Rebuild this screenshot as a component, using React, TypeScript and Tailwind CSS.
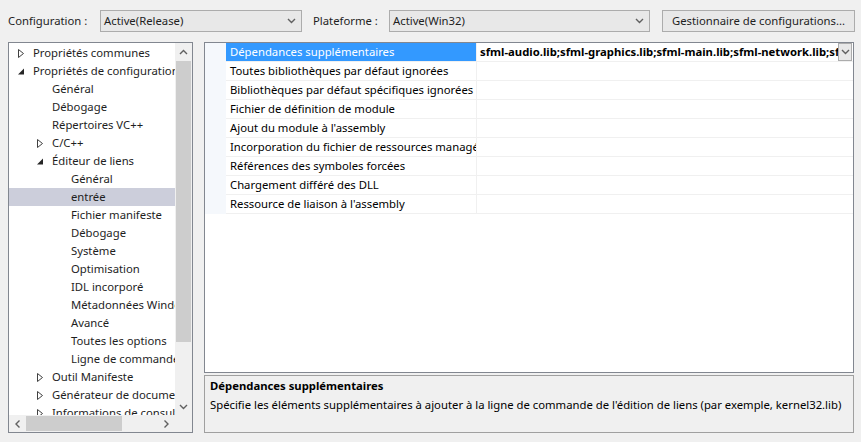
import React from 'react'

const font = "font-['Noto_Sans','Liberation_Sans',sans-serif]"

const Chevron = ({ className = '' }: { className?: string }) => (
  <svg width="9" height="6" viewBox="0 0 9 6" className={className}>
    <polyline points="1,1 4.5,4.5 8,1" fill="none" stroke="#606060" strokeWidth="1.4" />
  </svg>
)

const Select = ({ value, width }: { value: string; width: string }) => (
  <div
    className={`${width} h-[22px] flex items-center justify-between border border-[#acacac] bg-[#e8e8e8] pl-[3px] pr-[5px]`}
  >
    <span>{value}</span>
    <Chevron />
  </div>
)

type Node = { label: string; level: number; kind: 'open' | 'closed' | 'leaf'; selected?: boolean }

const tree: Node[] = [
  { label: 'Propriétés communes', level: 0, kind: 'closed' },
  { label: 'Propriétés de configuration', level: 0, kind: 'open' },
  { label: 'Général', level: 1, kind: 'leaf' },
  { label: 'Débogage', level: 1, kind: 'leaf' },
  { label: 'Répertoires VC++', level: 1, kind: 'leaf' },
  { label: 'C/C++', level: 1, kind: 'closed' },
  { label: 'Éditeur de liens', level: 1, kind: 'open' },
  { label: 'Général', level: 2, kind: 'leaf' },
  { label: 'entrée', level: 2, kind: 'leaf', selected: true },
  { label: 'Fichier manifeste', level: 2, kind: 'leaf' },
  { label: 'Débogage', level: 2, kind: 'leaf' },
  { label: 'Système', level: 2, kind: 'leaf' },
  { label: 'Optimisation', level: 2, kind: 'leaf' },
  { label: 'IDL incorporé', level: 2, kind: 'leaf' },
  { label: 'Métadonnées Windows', level: 2, kind: 'leaf' },
  { label: 'Avancé', level: 2, kind: 'leaf' },
  { label: 'Toutes les options', level: 2, kind: 'leaf' },
  { label: 'Ligne de commande', level: 2, kind: 'leaf' },
  { label: 'Outil Manifeste', level: 1, kind: 'closed' },
  { label: 'Générateur de documents XML', level: 1, kind: 'closed' },
  { label: 'Informations de consultation', level: 1, kind: 'closed' },
]

const indent = ['pl-[0px]', 'pl-[19px]', 'pl-[38px]']

const Arrow = ({ kind }: { kind: Node['kind'] }) => {
  if (kind === 'closed')
    return (
      <svg width="8" height="9" viewBox="0 0 8 9">
        <polygon points="1.5,0.5 6.5,4.5 1.5,8.5" fill="none" stroke="#404040" strokeWidth="1" />
      </svg>
    )
  if (kind === 'open')
    return (
      <svg width="8" height="9" viewBox="0 0 8 9">
        <polygon points="7,1.5 7,7.5 1,7.5" fill="#262626" />
      </svg>
    )
  return null
}

const props = [
  'Dépendances supplémentaires',
  'Toutes bibliothèques par défaut ignorées',
  'Bibliothèques par défaut spécifiques ignorées',
  'Fichier de définition de module',
  "Ajout du module à l'assembly",
  'Incorporation du fichier de ressources managées',
  'Références des symboles forcées',
  'Chargement différé des DLL',
  "Ressource de liaison à l'assembly",
]

const App = () => {
  return (
    <div className={`${font} text-[11.3px] text-[#1e1e1e] w-[861px] h-[442px] bg-[#f0f0f0] flex flex-col overflow-hidden`}>
      <div className="h-[42px] flex items-center pl-[8px]">
        <span className="w-[92px]">Configuration :</span>
        <Select value="Active(Release)" width="w-[202px]" />
        <span className="ml-[11px] w-[76px]">Plateforme :</span>
        <Select value="Active(Win32)" width="w-[261px]" />
        <div className="ml-[12px] w-[193px] h-[22px] border border-[#acacac] bg-[#e8e8e8] flex items-center justify-center">
          Gestionnaire de configurations...
        </div>
      </div>

      <div className="flex">
        <div className="ml-[8px] w-[185px] h-[391px] border border-[#828790] bg-white flex flex-col">
          <div className="flex h-[372px]">
            <div className="w-[166px] overflow-hidden pt-[1px]">
              {tree.map((n, i) => (
                <div
                  key={i}
                  className={`h-[18px] flex items-center whitespace-nowrap ${indent[n.level]} ${n.selected ? 'bg-[#cccedb]' : ''}`}
                >
                  <span className="w-[24px] flex justify-center shrink-0">
                    <Arrow kind={n.kind} />
                  </span>
                  <span>{n.label}</span>
                </div>
              ))}
            </div>
            <div className="w-[17px] bg-[#f0f0f0] flex flex-col">
              <div className="h-[17px] flex items-center justify-center">
                <Chevron className="rotate-180" />
              </div>
              <div className="flex-1 flex flex-col">
                <div className="h-[1px]" />
                <div className="mx-auto w-[15px] h-[281px] bg-[#cdcdcd]" />
              </div>
              <div className="h-[17px] flex items-center justify-center">
                <Chevron />
              </div>
            </div>
          </div>
          <div className="flex h-[17px]">
            <div className="w-[166px] bg-[#f0f0f0] flex items-center">
              <div className="w-[17px] flex justify-center">
                <Chevron className="rotate-90" />
              </div>
              <div className="w-[96px] h-[15px] bg-[#cdcdcd]" />
              <div className="flex-1" />
              <div className="w-[17px] flex justify-center">
                <Chevron className="-rotate-90" />
              </div>
            </div>
            <div className="w-[17px] bg-[#f0f0f0]" />
          </div>
        </div>

        <div className="ml-[11px] w-[650px] flex flex-col gap-[2px]">
          <div className="h-[331px] border border-[#828790] bg-white">
            {props.map((p, i) => (
              <div key={i} className="h-[19px] flex">
                <div className="w-[21px] bg-[#f5f8fc]" />
                <div
                  className={`w-[250px] pl-[4px] flex items-center whitespace-nowrap overflow-hidden border-b border-[#f0f0f0] ${
                    i === 0 ? 'bg-[#3399ff] text-white' : 'text-black'
                  }`}
                >
                  {p}
                </div>
                <div className="flex-1 flex items-center border-l border-b border-[#f0f0f0] overflow-hidden">
                  {i === 0 && (
                    <>
                      <span className="flex-1 pl-[3px] font-bold text-black whitespace-nowrap overflow-hidden">
                        sfml-audio.lib;sfml-graphics.lib;sfml-main.lib;sfml-network.lib;sfml-system.lib;sfml-window.lib
                      </span>
                      <div className="w-[14px] h-[18px] border border-[#acacac] bg-[#e8e8e8] flex items-center justify-center mr-[1px]">
                        <Chevron />
                      </div>
                    </>
                  )}
                </div>
              </div>
            ))}
          </div>
          <div className="h-[58px] border border-[#a0a0a0] bg-[#f0f0f0] px-[5px] text-black">
            <div className="font-bold leading-[19px]">Dépendances supplémentaires</div>
            <div className="leading-[19px] whitespace-nowrap">
              Spécifie les éléments supplémentaires à ajouter à la ligne de commande de l'édition de liens (par exemple, kernel32.lib)
            </div>
          </div>
        </div>
      </div>
    </div>
  )
}

export default App
